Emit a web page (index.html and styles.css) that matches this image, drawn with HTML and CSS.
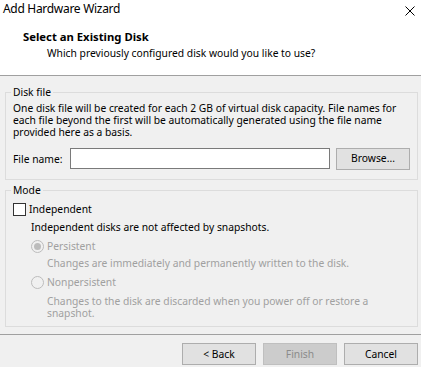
FILE: index.html
```html
<!DOCTYPE html>
<html lang="en">
<head>
<meta charset="utf-8">
<title>Add Hardware Wizard</title>
<link rel="stylesheet" href="styles.css">
</head>
<body>
<div class="window">
  <div class="top">
    <div class="titlebar">
      <span class="title">Add Hardware Wizard</span>
      <svg class="close" width="10" height="10" viewBox="0 0 10 10"><path d="M0.5 0.5 L9.5 9.5 M9.5 0.5 L0.5 9.5" stroke="#000" stroke-width="1" fill="none"/></svg>
    </div>
    <div class="heading">Select an Existing Disk</div>
    <div class="subheading">Which previously configured disk would you like to use?</div>
  </div>

  <fieldset class="group group-disk">
    <legend>Disk file</legend>
    <p class="desc-main">One disk file will be created for each 2 GB of virtual disk capacity. File names for each file beyond the first will be automatically generated using the file name provided here as a basis.</p>
    <div class="file-row">
      <label class="file-label">File name:</label>
      <input class="file-input" type="text">
      <button class="btn">Browse...</button>
    </div>
  </fieldset>

  <fieldset class="group group-mode">
    <legend>Mode</legend>
    <div class="check-row">
      <span class="checkbox"></span>
      <span>Independent</span>
    </div>
    <div class="indep-desc">Independent disks are not affected by snapshots.</div>
    <div class="radio-row r1">
      <svg class="radio" width="13" height="13" viewBox="0 0 13 13"><circle cx="6.5" cy="6.5" r="6" fill="#f0f0f0" stroke="#bcbcbc"/><circle cx="6.5" cy="6.5" r="3.5" fill="#bcbcbc"/></svg>
      <span>Persistent</span>
    </div>
    <div class="radio-desc d1">Changes are immediately and permanently written to the disk.</div>
    <div class="radio-row r2">
      <svg class="radio" width="13" height="13" viewBox="0 0 13 13"><circle cx="6.5" cy="6.5" r="6" fill="#f0f0f0" stroke="#bcbcbc"/></svg>
      <span>Nonpersistent</span>
    </div>
    <div class="radio-desc d2">Changes to the disk are discarded when you power off or restore a snapshot.</div>
  </fieldset>

  <div class="footer">
    <button class="btn">&lt; Back</button>
    <button class="btn btn-disabled">Finish</button>
    <button class="btn">Cancel</button>
  </div>
</div>
</body>
</html>
```
FILE: styles.css
```css
html, body {
  margin: 0;
  padding: 0;
  background: #f0f0f0;
}
body {
  font-family: "Noto Sans", "Open Sans", sans-serif;
  font-size: 10.3px;
  line-height: 12px;
  color: #000;
}
.window {
  width: 421px;
  height: 367px;
  overflow: hidden;
  background: #f0f0f0;
}
.top {
  background: #fff;
  height: 75px;
  border-bottom: 1px solid #a0a0a0;
}
.titlebar {
  height: 30px;
  display: flex;
  align-items: flex-start;
  justify-content: space-between;
}
.title {
  font-size: 12px;
  line-height: 16px;
  letter-spacing: -0.3px;
  padding: 1px 0 0 3px;
}
.close {
  margin: 6px 6px 0 0;
}
.heading {
  font-weight: 700;
  font-size: 11.3px;
  line-height: 14px;
  padding-left: 23px;
}
.subheading {
  margin-top: 3px;
  padding-left: 47px;
}
.group {
  border: 1px solid #dcdcdc;
  margin: 0 3px 0 5px;
  padding: 0 7px 0 7px;
  min-width: 0;
}
.group legend {
  line-height: 13px;
  padding: 0 2px;
  margin-left: -2px;
}
.group-disk {
  margin-top: 10px;
  padding-bottom: 10px;
}
.desc-main {
  margin: 3px 0 0 0;
}
.file-row {
  display: flex;
  align-items: center;
  margin-top: 10px;
  height: 21px;
}
.file-label {
  width: 57px;
  flex: none;
}
.file-input {
  box-sizing: border-box;
  width: 260px;
  height: 21px;
  border: 1px solid #7a7a7a;
  background: #fff;
  margin: 0;
  padding: 0 3px;
  font: inherit;
  outline: none;
}
.file-row .btn {
  margin-left: 6px;
}
.btn {
  box-sizing: border-box;
  width: 74px;
  height: 22px;
  background: #e1e1e1;
  border: 1px solid #adadad;
  border-radius: 0;
  margin: 0;
  padding: 0;
  font: inherit;
  color: #000;
  line-height: 19px;
}
.btn-disabled {
  background: #cccccc;
  border-color: #bfbfbf;
  color: #8b8b8b;
}
.group-mode {
  margin-top: 4px;
  padding-bottom: 7px;
}
.check-row {
  display: flex;
  align-items: flex-start;
  margin-top: 6px;
  height: 13px;
}
.checkbox {
  box-sizing: border-box;
  width: 13px;
  height: 13px;
  border: 1px solid #333;
  background: #fff;
  margin-right: 3px;
  flex: none;
}
.indep-desc {
  margin: 5px 0 0 18px;
}
.radio-row {
  display: flex;
  align-items: flex-start;
  height: 13px;
  margin-left: 18px;
  color: #a0a0a0;
}
.radio {
  flex: none;
  margin-right: 3px;
}
.r1 { margin-top: 7px; }
.r2 { margin-top: 7px; }
.radio-desc {
  margin-left: 34px;
  color: #a0a0a0;
}
.d1 { margin-top: 4px; }
.d2 { margin-top: 6px; }
.footer {
  display: flex;
  justify-content: flex-end;
  gap: 7px;
  margin-top: 7px;
  border-top: 1px solid #a0a0a0;
  padding: 8px 3px 0 0;
}
```
